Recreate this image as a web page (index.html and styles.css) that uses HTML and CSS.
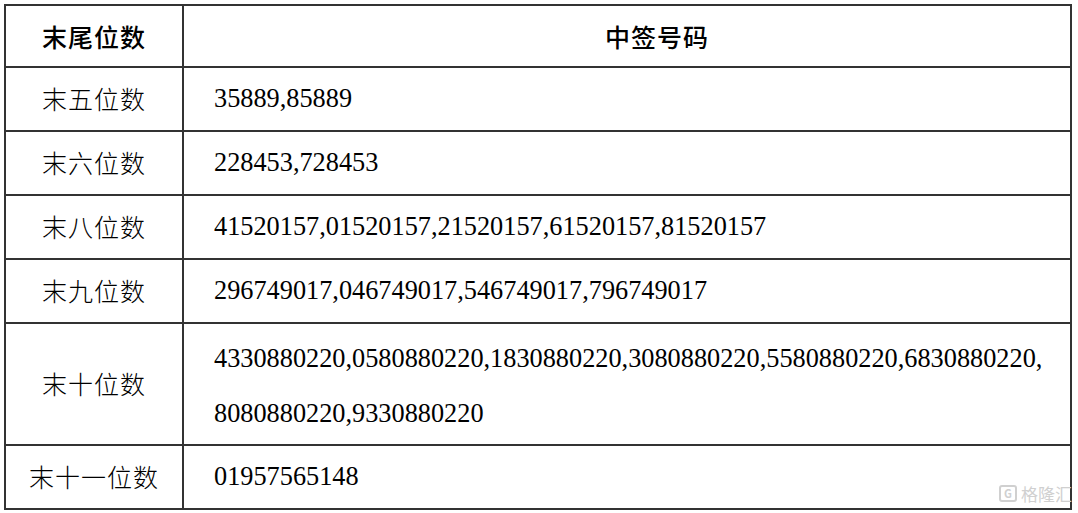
FILE: index.html
```html
<!DOCTYPE html>
<html lang="zh-CN">
<head>
<meta charset="utf-8">
<link rel="stylesheet" href="styles.css">
</head>
<body>
<div class="page">
<table class="lot">
  <tr class="r-head">
    <th class="c1">末尾位数</th>
    <th class="c2 h2">中签号码</th>
  </tr>
  <tr class="r-n">
    <td class="c1">末五位数</td>
    <td class="c2 num">35889,85889</td>
  </tr>
  <tr class="r-n">
    <td class="c1">末六位数</td>
    <td class="c2 num">228453,728453</td>
  </tr>
  <tr class="r-n">
    <td class="c1">末八位数</td>
    <td class="c2 num">41520157,01520157,21520157,61520157,81520157</td>
  </tr>
  <tr class="r-n">
    <td class="c1">末九位数</td>
    <td class="c2 num">296749017,046749017,546749017,796749017</td>
  </tr>
  <tr class="r-2">
    <td class="c1">末十位数</td>
    <td class="c2 num two">4330880220,0580880220,1830880220,3080880220,5580880220,6830880220,<br>8080880220,9330880220</td>
  </tr>
  <tr class="r-n">
    <td class="c1">末十一位数</td>
    <td class="c2 num">01957565148</td>
  </tr>
</table>
<div class="mark"><span class="g">G</span><span class="mt">格隆汇</span></div>
</div>
</body>
</html>
```
FILE: styles.css
```css
html, body {
  margin: 0;
  padding: 0;
  background: #fff;
}
.page {
  position: relative;
  width: 1078px;
  height: 513px;
  padding: 4px 0 0 4px;
  box-sizing: border-box;
}
.lot {
  border-collapse: collapse;
  width: 1068px;
  table-layout: fixed;
  color: #000;
}
.lot th, .lot td {
  border: 2px solid #333;
  padding: 0;
  vertical-align: middle;
}
.lot .c1 {
  width: 176px;
  text-align: center;
  font-family: "Noto Sans CJK SC", sans-serif;
  font-weight: 300;
  font-size: 25px;
  letter-spacing: 1px;
  padding-bottom: 2px;
}
.lot th {
  font-family: "Noto Sans CJK SC", sans-serif;
  font-weight: 500;
  font-size: 25px;
  text-align: center;
}
.lot th.c1 { font-weight: 500; padding-bottom: 0; }
.lot th.h2 { padding-left: 60px; letter-spacing: 1px; }
.r-head { height: 62px; }
.r-n { height: 64px; }
.r-2 { height: 122px; }
.num {
  font-family: "Liberation Serif", "Times New Roman", serif;
  font-size: 26.3px;
  padding-left: 30px !important;
  line-height: 30px;
}
.num.two {
  line-height: 55px;
  padding-top: 3px !important;
}
.mark {
  position: absolute;
  right: 6px;
  bottom: 7px;
  display: flex;
  align-items: center;
  gap: 4px;
  color: #d0d0d0;
  font-family: "Noto Sans CJK SC", sans-serif;
  font-size: 17px;
}
.mark .g {
  display: inline-flex;
  width: 18px;
  height: 17px;
  border: 2px solid #d0d0d0;
  border-radius: 3px;
  box-sizing: border-box;
  font-size: 11px;
  font-weight: 700;
  align-items: center;
  justify-content: center;
  line-height: 1;
}
.mark .mt { letter-spacing: 0; }
```
